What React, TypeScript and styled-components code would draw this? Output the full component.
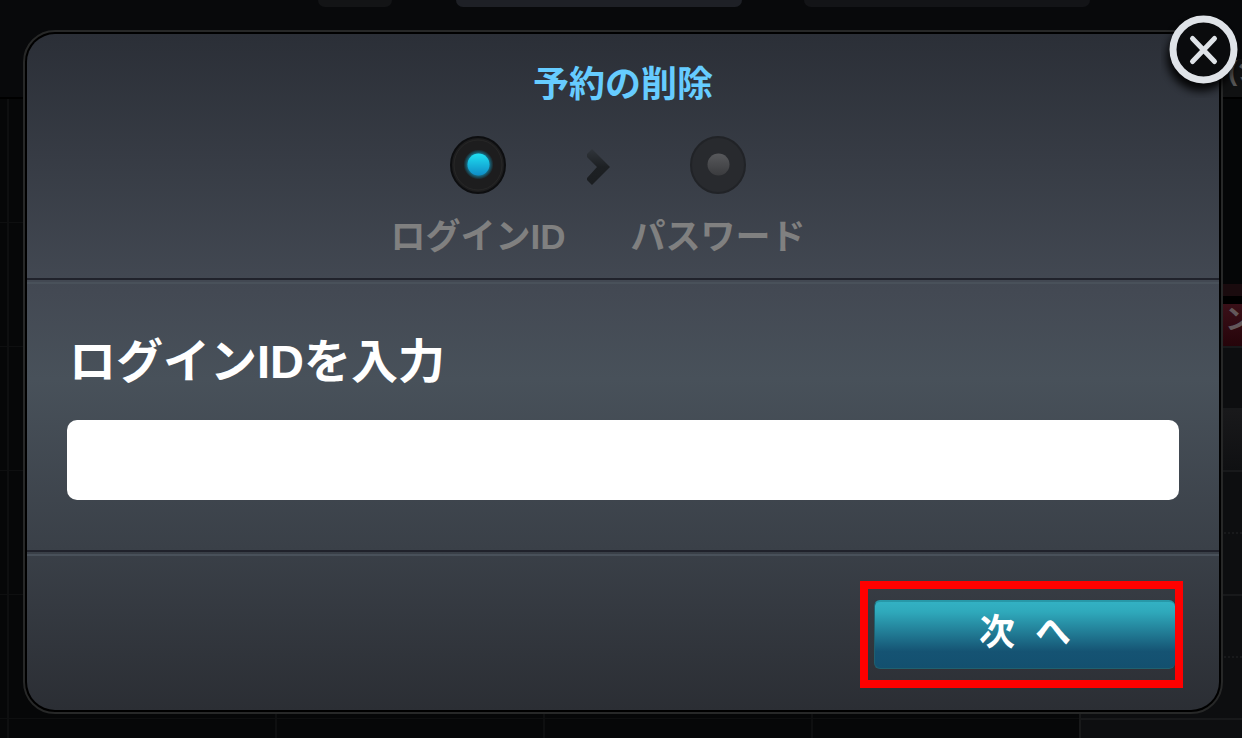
import React, { useState } from 'react';
import styled, { createGlobalStyle } from 'styled-components';

const GlobalStyle = createGlobalStyle`
  *, *::before, *::after { box-sizing: border-box; }
  body {
    margin: 0;
    background: #08090b;
    font-family: "Liberation Sans", "Noto Sans CJK JP", sans-serif;
    font-weight: 700;
  }
`;

const Page = styled.div`
  position: relative;
  min-height: 100vh;
  overflow: hidden;
  padding: 30px 19px 24px 23px;
`;

/* Dimmed programme guide behind the dialog */
const Backdrop = styled.div`
  position: absolute;
  inset: 0;
  display: flex;
  flex-direction: column;
  overflow: hidden;
  background: #08090b;
`;

const GuideBar = styled.div`
  display: flex;
  flex: none;
  height: 99px;
  padding-left: 318px;
  border-bottom: 2px solid #000;
`;

const GuideTab = styled.div<{ $width: number; $gap: number; $color: string }>`
  flex: none;
  width: ${p => p.$width}px;
  height: 7px;
  margin-right: ${p => p.$gap}px;
  border-radius: 0 0 12px 12px;
  background: ${p => p.$color};
`;

const GuideBody = styled.div`
  display: flex;
  flex: 1;
`;

const GuideGrid = styled.div`
  flex: 1;
  background:
    repeating-linear-gradient(90deg, transparent 0 7px, #0e0f10 7px 9px, transparent 9px 268px),
    repeating-linear-gradient(180deg, transparent 0 123px, #0e0f10 123px 124px),
    #060708;
`;

const GuideColumn = styled.div`
  width: 163px;
  border-left: 2px solid #18191a;
  background: #0d0e10;
`;

const ColumnBlank = styled.div`
  height: 185px;
  background: #050607;
`;

const ColumnStripe = styled.div`
  height: 20px;
  border-bottom: 8px solid #000;
  background: #1a0b0e;
`;

const ColumnTag = styled.div`
  height: 44px;
  padding-left: 144px;
  border-bottom: 2px solid #18191b;
  background: linear-gradient(#3a1018, #26040a);
  color: #63585a;
  font-size: 28px;
  line-height: 32px;
  white-space: nowrap;
`;

const ColumnCell = styled.div<{ $height: number; $lit?: boolean; $dotted?: boolean }>`
  height: ${p => p.$height}px;
  border-bottom: 2px ${p => (p.$dotted ? 'dotted' : 'solid')} #18191b;
  background: ${p => (p.$lit ? 'linear-gradient(#19191b, #0f1012)' : 'transparent')};
`;

const Corner = styled.div`
  display: flex;
  align-items: flex-end;
  margin-left: auto;
  height: 97px;
  width: 19px;
`;

const CornerText = styled.span`
  width: 19px;
  height: 38px;
  padding-left: 5px;
  background: #101112;
  color: #555;
  font-size: 28px;
  line-height: 24px;
  white-space: nowrap;
`;

const Dialog = styled.form`
  position: relative;
  border: 2px solid #272828;
  border-radius: 32px;
  background: #000;
  padding: 2px;
`;

const Panel = styled.div`
  border-radius: 28px;
  background: linear-gradient(#2b2f37 0%, #434953 38%, #48515a 51%, #3a4048 76%, #2b2e34 100%);
`;

const Header = styled.header`
  display: flex;
  flex-direction: column;
  align-items: center;
  height: 244px;
  padding-top: 27px;
`;

const Title = styled.h1`
  margin: 0;
  color: #66ccff;
  font-size: 36px;
  line-height: 48px;
`;

const Steps = styled.ol`
  display: flex;
  margin: 24px 50px 0 0;
  padding: 0;
  list-style: none;
`;

const Step = styled.li`
  display: flex;
  flex-direction: column;
  align-items: center;
  width: 180px;
  color: #808080;
  font-size: 35px;
  line-height: 48px;
  gap: 16px;
  white-space: nowrap;
`;

const Lamp = styled.svg`
  display: block;
  width: 64px;
  height: 64px;
`;

const Chevron = styled.svg`
  display: block;
  width: 24px;
  height: 36px;
  margin: 16px 18px 0;
`;

const Divider = styled.hr`
  height: 6px;
  margin: 0;
  border: 0;
  border-top: 2px solid #20222b;
  border-bottom: 2px solid #49515a;
`;

const Body = styled.div`
  height: 266px;
  padding: 46px 40px 0;
`;

const FieldLabel = styled.label`
  display: block;
  padding-left: 2px;
  color: #fff;
  font-size: 47px;
  line-height: 64px;
`;

const Field = styled.input`
  display: block;
  width: 100%;
  height: 80px;
  margin-top: 26px;
  padding: 0 20px;
  border: 0;
  border-radius: 10px;
  outline: none;
  background: #fff;
  color: #222;
  font: 400 40px "Liberation Sans", "Noto Sans CJK JP", sans-serif;
`;

const Footer = styled.footer`
  display: flex;
  justify-content: flex-end;
  padding: 25px 36px 22px;
`;

const Highlight = styled.div`
  width: 323px;
  height: 107px;
  padding: 11px 0 0 6px;
  border: 8px solid #f00;
`;

const NextButton = styled.button`
  display: block;
  width: 100%;
  height: 69px;
  padding: 0 0 4px;
  border: 1px solid #20606f;
  border-top: 2px solid #2798a8;
  border-right: 0;
  border-radius: 6px;
  background: linear-gradient(#33b1c3 0%, #2fa9bb 15%, #155373 75%, #13506f 100%);
  color: #fff;
  font: 700 36px/48px "Liberation Sans", "Noto Sans CJK JP", sans-serif;
  white-space: pre;
  cursor: pointer;
`;

const CloseButton = styled.button`
  position: absolute;
  top: -22px;
  right: -24px;
  width: 84px;
  height: 88px;
  padding: 0;
  border: 0;
  background: none;
  cursor: pointer;
`;

const StepLamp = ({ active }: { active?: boolean }) => (
  <Lamp viewBox="0 0 64 64" aria-hidden="true">
    <defs>
      <linearGradient id="lampOn" x1="0" y1="0" x2="0" y2="1">
        <stop offset="0" stopColor="#1fe0f2" />
        <stop offset="1" stopColor="#0f8cc6" />
      </linearGradient>
      <linearGradient id="lampOff" x1="0" y1="0" x2="0" y2="1">
        <stop offset="0" stopColor="#58595c" />
        <stop offset="1" stopColor="#3a3b3e" />
      </linearGradient>
      <radialGradient id="lampGlow">
        <stop offset="0.6" stopColor="#12a0c8" stopOpacity="0.9" />
        <stop offset="1" stopColor="#12a0c8" stopOpacity="0" />
      </radialGradient>
    </defs>
    <ellipse cx="32" cy="32" rx="27" ry="28" fill={active ? '#1d1d1e' : '#282a2e'} stroke={active ? '#0d0e10' : '#212327'} strokeWidth="2" />
    {active && <ellipse cx="32" cy="32" rx="24" ry="25" fill="none" stroke="#272727" strokeWidth="1" />}
    {active && <circle cx="32.500" cy="31.500" r="15" fill="url(#lampGlow)" />}
    <circle cx="32.500" cy="31.500" r="11" fill={active ? 'url(#lampOn)' : 'url(#lampOff)'} />
  </Lamp>
);

export default function App() {
  const [loginId, setLoginId] = useState('');
  return (
    <Page>
      <GlobalStyle />
      <Backdrop aria-hidden="true">
        <GuideBar>
          <GuideTab $width={74} $gap={64} $color="#131416" />
          <GuideTab $width={286} $gap={62} $color="#1e2026" />
          <GuideTab $width={286} $gap={0} $color="#131417" />
          <Corner><CornerText>(ジ</CornerText></Corner>
        </GuideBar>
        <GuideBody>
          <GuideGrid />
          <GuideColumn>
            <ColumnBlank />
            <ColumnStripe />
            <ColumnTag>ン</ColumnTag>
            <ColumnCell $height={62} />
            <ColumnCell $height={62} $lit />
            <ColumnCell $height={62} $dotted />
            <ColumnCell $height={62} />
            <ColumnCell $height={62} $dotted />
            <ColumnCell $height={62} />
          </GuideColumn>
        </GuideBody>
      </Backdrop>
      <Dialog onSubmit={e => e.preventDefault()}>
        <Panel>
          <Header>
            <Title>予約の削除</Title>
            <Steps>
              <Step aria-current="step"><StepLamp active />ログインID</Step>
              <li aria-hidden="true">
                <Chevron viewBox="0 0 24 36">
                  <defs>
                    <linearGradient id="chevron" x1="0" y1="0" x2="0" y2="1">
                      <stop offset="0" stopColor="#30353b" />
                      <stop offset="0.5" stopColor="#1d2023" />
                      <stop offset="1" stopColor="#1b1e21" />
                    </linearGradient>
                  </defs>
                  <path d="M6 0 24 18 6 36 1 31V29L11 18 1 8V5Z" fill="url(#chevron)" />
                </Chevron>
              </li>
              <Step><StepLamp />パスワード</Step>
            </Steps>
          </Header>
          <Divider />
          <Body>
            <FieldLabel htmlFor="login-id">ログインIDを入力</FieldLabel>
            <Field id="login-id" type="text" value={loginId} onChange={e => setLoginId(e.target.value)} />
          </Body>
          <Divider />
          <Footer>
            <Highlight>
              <NextButton type="submit">次{'  '}へ</NextButton>
            </Highlight>
          </Footer>
        </Panel>
        <CloseButton type="button" aria-label="閉じる">
          <svg width="84" height="88" viewBox="0 0 84 88">
            <defs>
              <filter id="closeShadow" x="-30%" y="-30%" width="160%" height="160%">
                <feGaussianBlur stdDeviation="4" />
              </filter>
            </defs>
            <circle cx="40" cy="47" r="34" fill="#000" opacity="0.9" filter="url(#closeShadow)" />
            <circle cx="42.500" cy="39.500" r="30.500" fill="#0a0b0d" stroke="#dfe3e8" strokeWidth="7" />
            <path d="M31.500 28.500 53.500 51.500M53.500 28.500 31.500 51.500" stroke="#dfe3e8" strokeWidth="5" strokeLinecap="round" />
          </svg>
        </CloseButton>
      </Dialog>
    </Page>
  );
}
